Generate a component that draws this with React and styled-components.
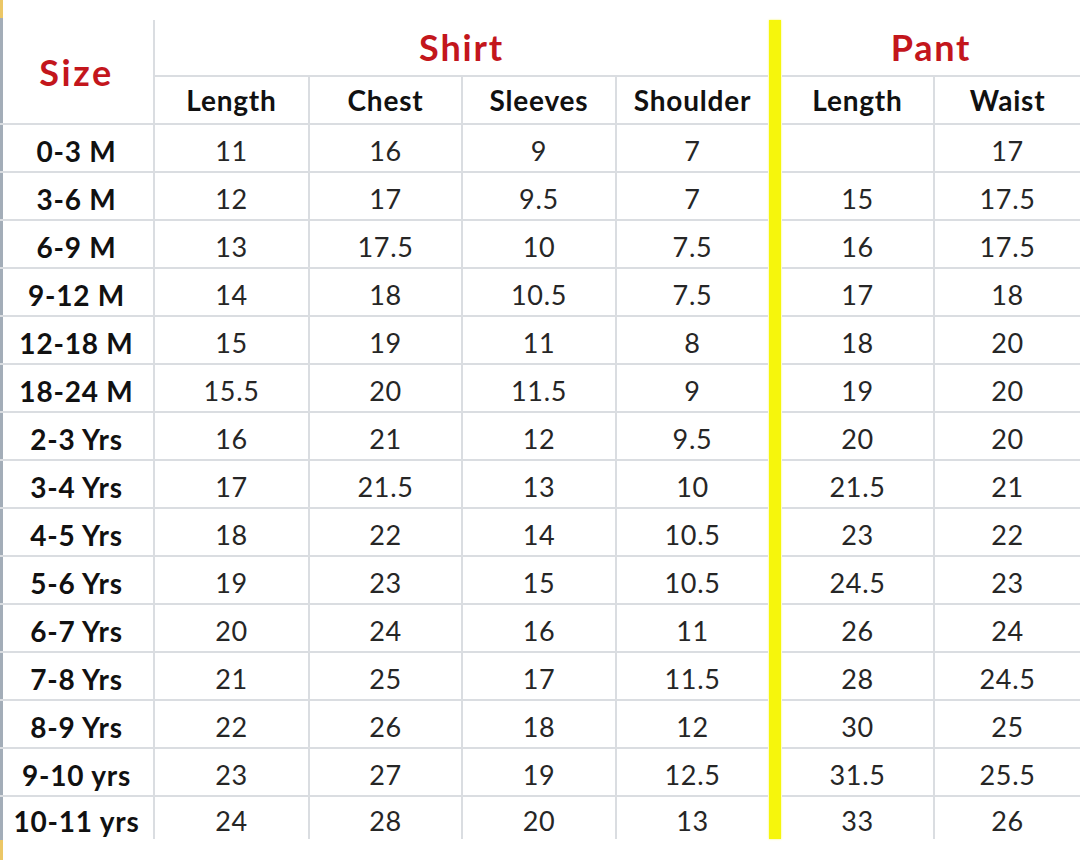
import React from "react";
import styled, { createGlobalStyle } from "styled-components";

const GlobalStyle = createGlobalStyle`
  html, body {
    margin: 0;
    padding: 0;
    background: #ffffff;
  }
  body {
    font-family: Lato, "Open Sans", "Liberation Sans", sans-serif;
  }
`;

const PAGE = styled.div`
  width: 1080px;
  height: 860px;
  box-sizing: border-box;
  padding-top: 20px;
  overflow: hidden;
  background: linear-gradient(
      to bottom,
      #ecc766 0 18px,
      #a3adb8 18px 840px,
      #ecc766 840px
    )
    left top / 3px 100% no-repeat;
`;

const CHART = styled.div`
  display: grid;
  grid-template-columns: 155px 155px 153px 154px 151px 14px 153px 145px;
  grid-template-rows: 57px 48px repeat(14, 48px) 42px;
`;

const CELL = styled.div`
  display: flex;
  align-items: center;
  justify-content: center;
  box-sizing: border-box;
  padding-top: ${(props) => (props.$head ? "0" : "5px")};
  border-bottom: ${(props) => (props.$last ? "none" : "2px solid #dadde1")};
  border-right: ${(props) => (props.$edge ? "none" : "2px solid #dadde1")};
  font-size: ${(props) => (props.$bold ? "28px" : "27px")};
  letter-spacing: ${(props) => (props.$bold ? "0.8px" : "0.7px")};
  font-weight: ${(props) => (props.$bold ? 700 : 400)};
  color: ${(props) => (props.$bold ? "#111111" : "#262626")};
  white-space: nowrap;
`;

const SIZE_HEAD = styled(CELL)`
  grid-row: 1 / 3;
  grid-column: 1;
  padding-top: 0;
  font-size: 36px;
  letter-spacing: 2.5px;
  color: #c3161c;
`;

const GROUP_HEAD = styled(CELL)`
  grid-column: ${(props) => props.$span};
  padding-top: 0;
  padding-bottom: 2px;
  font-size: 36px;
  letter-spacing: 1.8px;
  color: #c3161c;
`;

const DIVIDER = styled.div`
  grid-row: 1 / -1;
  grid-column: 6;
  margin: 0 1px;
  background: #f6f60c;
  box-shadow: 0 0 2px #f6f66a;
`;

const SUB_HEADS = ["Length", "Chest", "Sleeves", "Shoulder", "Length", "Waist"];

const ROWS = [
  ["0-3 M", "11", "16", "9", "7", "", "17"],
  ["3-6 M", "12", "17", "9.5", "7", "15", "17.5"],
  ["6-9 M", "13", "17.5", "10", "7.5", "16", "17.5"],
  ["9-12 M", "14", "18", "10.5", "7.5", "17", "18"],
  ["12-18 M", "15", "19", "11", "8", "18", "20"],
  ["18-24 M", "15.5", "20", "11.5", "9", "19", "20"],
  ["2-3 Yrs", "16", "21", "12", "9.5", "20", "20"],
  ["3-4 Yrs", "17", "21.5", "13", "10", "21.5", "21"],
  ["4-5 Yrs", "18", "22", "14", "10.5", "23", "22"],
  ["5-6 Yrs", "19", "23", "15", "10.5", "24.5", "23"],
  ["6-7 Yrs", "20", "24", "16", "11", "26", "24"],
  ["7-8 Yrs", "21", "25", "17", "11.5", "28", "24.5"],
  ["8-9 Yrs", "22", "26", "18", "12", "30", "25"],
  ["9-10 yrs", "23", "27", "19", "12.5", "31.5", "25.5"],
  ["10-11 yrs", "24", "28", "20", "13", "33", "26"],
];

// columns that sit just before the yellow divider or at the right edge
const isEdge = (i) => i === 4 || i === 6;

const App = () => {
  return (
    <>
      <GlobalStyle />
      <PAGE>
        <CHART>
          <SIZE_HEAD $bold $head>
            Size
          </SIZE_HEAD>
          <GROUP_HEAD $bold $head $edge $span="2 / 6">
            Shirt
          </GROUP_HEAD>
          <DIVIDER />
          <GROUP_HEAD $bold $head $edge $span="7 / 9">
            Pant
          </GROUP_HEAD>

          {SUB_HEADS.map((label, i) => (
            <CELL
              key={"h" + i}
              $bold
              $head
              $edge={isEdge(i + 1)}
              style={{ gridColumn: i + 2 > 5 ? i + 3 : i + 2 }}
            >
              {label}
            </CELL>
          ))}

          {ROWS.map((row, r) =>
            row.map((value, i) => (
              <CELL
                key={r + "-" + i}
                $bold={i === 0}
                $edge={isEdge(i)}
                $last={r === ROWS.length - 1}
                style={{ gridColumn: i > 4 ? i + 2 : i + 1 }}
              >
                {value}
              </CELL>
            ))
          )}
        </CHART>
      </PAGE>
    </>
  );
};

export default App;
